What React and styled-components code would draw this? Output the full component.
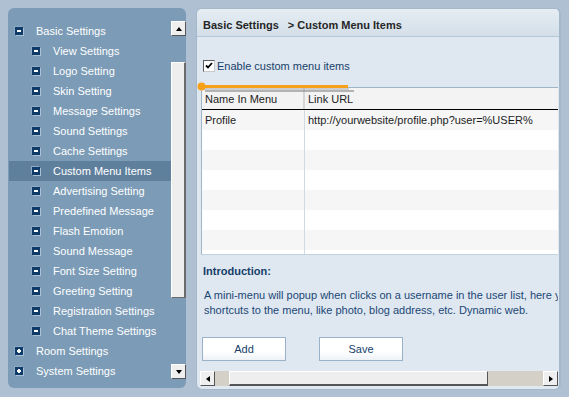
import React from 'react';
import styled, { createGlobalStyle } from 'styled-components';

const GlobalStyle = createGlobalStyle`
  html, body {
    margin: 0;
    padding: 0;
    background: #afc0d2;
  }
  body {
    font-family: "Liberation Sans", Arial, sans-serif;
    font-size: 11px;
  }
`;

const Page = styled.div`
  display: flex;
  gap: 10px;
  padding: 8px 8px 0 8px;
  height: 397px;
  box-sizing: border-box;
`;

const Sidebar = styled.div`
  width: 178px;
  height: 380px;
  background: #7b9bb6;
  border-radius: 6px;
  display: flex;
  padding-left: 1px;
  box-sizing: border-box;
  overflow: hidden;
`;

const Tree = styled.div`
  flex: 1;
  padding-top: 13px;
`;

const TreeRow = styled.div`
  height: 20px;
  display: flex;
  align-items: center;
  gap: 13px;
  padding-left: ${p => (p.$level ? 23 : 6)}px;
  background: ${p => (p.$active ? '#5f809d' : 'transparent')};
  color: #fff;
  white-space: nowrap;
`;

const ToggleIcon = styled.span`
  position: relative;
  width: 8px;
  height: 8px;
  flex: none;
  background: #0f3b69;
  box-shadow: 1px 1px 0 #a9c0d6, -1px -1px 0 #8fabc4;

  &::before {
    content: '';
    position: absolute;
    left: 2px;
    top: 3px;
    width: 4px;
    height: 2px;
    background: #fff;
  }

  &::after {
    content: '';
    display: ${p => (p.$open ? 'none' : 'block')};
    position: absolute;
    left: 3px;
    top: 2px;
    width: 2px;
    height: 4px;
    background: #fff;
  }
`;

const VScroll = styled.div`
  width: 15px;
  margin-top: 13px;
  height: 358px;
  display: flex;
  flex-direction: column;
`;

const ScrollButton = styled.div`
  width: 15px;
  height: 15px;
  flex: none;
  box-sizing: border-box;
  background: #efefef;
  border-top: 1px solid #fff;
  border-left: 1px solid #fff;
  border-right: 1px solid #555;
  border-bottom: 1px solid #555;
  display: flex;
  align-items: center;
  justify-content: center;
`;

const Arrow = styled.span`
  width: 0;
  height: 0;
  border-style: solid;
  border-color: transparent;
  ${p => p.$dir === 'up' && 'border-width: 0 3.5px 4px 3.5px; border-bottom-color: #000;'}
  ${p => p.$dir === 'down' && 'border-width: 4px 3.5px 0 3.5px; border-top-color: #000;'}
  ${p => p.$dir === 'left' && 'border-width: 3.5px 4px 3.5px 0; border-right-color: #000;'}
  ${p => p.$dir === 'right' && 'border-width: 3.5px 0 3.5px 4px; border-left-color: #000;'}
`;

const VTrack = styled.div`
  flex: 1;
  display: flex;
  flex-direction: column;
`;

const VThumb = styled.div`
  margin-top: ${p => p.$offset}px;
  height: ${p => p.$size}px;
  background: #eeeeee;
  border-top: 1px solid #fff;
  border-left: 1px solid #fff;
  border-right: 2px solid #6b6b6b;
  border-bottom: 1px solid #6b6b6b;
  box-sizing: border-box;
`;

const Panel = styled.div`
  position: relative;
  width: 365px;
  height: 382px;
  background: #dfe7f0;
  border: 1px solid #a5b8ca;
  border-right-width: 2px;
  border-radius: 6px;
  box-sizing: border-box;
  display: flex;
  flex-direction: column;
  overflow: hidden;
`;

const PanelHeader = styled.div`
  height: 28px;
  box-sizing: border-box;
  padding: 4px 0 0 6px;
  flex: none;
  display: flex;
  align-items: center;
  background: linear-gradient(#e6edf3, #d3dfe9);
  border-bottom: 1px solid #b7c8d7;
  font-weight: bold;
  color: #262626;
  white-space: nowrap;
`;

const Crumb = styled.span`
  margin-left: 9px;
`;

const PanelBody = styled.div`
  flex: 1;
  display: flex;
  flex-direction: column;
  padding: 1px 1px 3px 3px;
`;

const Viewport = styled.div`
  height: 333px;
  overflow: hidden;
`;

const Canvas = styled.div`
  width: 520px;
  display: flex;
  flex-direction: column;
  align-items: flex-start;
`;

const CheckRow = styled.label`
  margin: 22px 0 0 3px;
  height: 12px;
  display: flex;
  align-items: center;
  gap: 2px;
  color: #173f6a;
`;

const CheckBox = styled.span`
  width: 12px;
  height: 12px;
  box-sizing: border-box;
  background: #fff;
  border-top: 1px solid #5b5b5b;
  border-left: 1px solid #5b5b5b;
  border-right: 1px solid #c9c9c9;
  border-bottom: 1px solid #c9c9c9;
  display: flex;
  align-items: center;
  justify-content: center;
`;

const Annotation = styled.svg`
  position: absolute;
  left: 0;
  top: 68px;
`;

const Table = styled.div`
  margin: 15px 0 0 1px;
  width: 420px;
  height: 168px;
  border-left: 1px solid #9fb5c8;
  border-top: 1px solid #9fb5c8;
  border-bottom: 1px solid #c3d2df;
  box-sizing: border-box;
  overflow: hidden;
  background: #fff;
`;

const HeadRow = styled.div`
  display: grid;
  grid-template-columns: 101px 1fr;
  height: 21px;
  border-bottom: 1px solid #000;
  background: #f3f3f3;
  color: #1d1d1d;
`;

const HeadCell = styled.div`
  display: flex;
  align-items: center;
  padding-left: 3px;
  border-left: ${p => (p.$first ? 'none' : '2px solid #d6d6d6')};
`;

const BodyRow = styled.div`
  display: grid;
  grid-template-columns: 101px 1fr;
  height: 20px;
  background: ${p => (p.$odd ? '#f6f6f6' : '#fff')};
  color: #1d1d1d;
`;

const Cell = styled.div`
  display: flex;
  align-items: center;
  padding-left: 3px;
  border-left: ${p => (p.$first ? 'none' : '1px solid #d0dae2')};
  margin-left: ${p => (p.$first ? 0 : 1)}px;
  white-space: nowrap;
`;

const IntroTitle = styled.div`
  margin: 9px 0 0 3px;
  line-height: 14px;
  font-weight: bold;
  color: #163e68;
`;

const IntroText = styled.p`
  margin: 10px 0 0 4px;
  line-height: 15px;
  color: #1b4776;
  white-space: nowrap;
`;

const ButtonRow = styled.div`
  display: flex;
  gap: 33px;
  margin: 19px 0 0 2px;
`;

const Button = styled.button`
  width: 84px;
  height: 24px;
  padding: 0;
  font: inherit;
  color: #173f6a;
  background: linear-gradient(#fff 60%, #eef2f6);
  border: 1px solid #9ab2c7;
  cursor: pointer;
`;

const HScroll = styled.div`
  height: 15px;
  display: flex;
  background: #d4d0c8;
`;

const HThumb = styled.div`
  margin-left: ${p => p.$offset}px;
  width: ${p => p.$size}px;
  background: #eeeeee;
  border-top: 1px solid #fff;
  border-left: 1px solid #fff;
  border-right: 1px solid #555;
  border-bottom: 2px solid #555;
  box-sizing: border-box;
`;

const HSpacer = styled.div`
  flex: 1;
`;

const menu = [
  { label: 'Basic Settings', level: 0, open: true },
  { label: 'View Settings', level: 1 },
  { label: 'Logo Setting', level: 1 },
  { label: 'Skin Setting', level: 1 },
  { label: 'Message Settings', level: 1 },
  { label: 'Sound Settings', level: 1 },
  { label: 'Cache Settings', level: 1 },
  { label: 'Custom Menu Items', level: 1, active: true },
  { label: 'Advertising Setting', level: 1 },
  { label: 'Predefined Message', level: 1 },
  { label: 'Flash Emotion', level: 1 },
  { label: 'Sound Message', level: 1 },
  { label: 'Font Size Setting', level: 1 },
  { label: 'Greeting Setting', level: 1 },
  { label: 'Registration Settings', level: 1 },
  { label: 'Chat Theme Settings', level: 1 },
  { label: 'Room Settings', level: 0, open: false },
  { label: 'System Settings', level: 0, open: false },
];

const items = [
  { name: 'Profile', url: 'http://yourwebsite/profile.php?user=%USER%' },
  {}, {}, {}, {}, {}, {}, {},
];

const App = () => {
  return (
    <>
      <GlobalStyle />
      <Page>
        <Sidebar>
          <Tree>
            {menu.map(m => (
              <TreeRow key={m.label} $level={m.level} $active={m.active}>
                <ToggleIcon $open={m.level === 1 || m.open} />
                {m.label}
              </TreeRow>
            ))}
          </Tree>
          <VScroll>
            <ScrollButton><Arrow $dir="up" /></ScrollButton>
            <VTrack>
              <VThumb $offset={26} $size={236} />
            </VTrack>
            <ScrollButton><Arrow $dir="down" /></ScrollButton>
          </VScroll>
        </Sidebar>

        <Panel>
          <PanelHeader>
            Basic Settings<Crumb>&gt; Custom Menu Items</Crumb>
          </PanelHeader>
          <PanelBody>
            <Viewport>
              <Canvas>
                <CheckRow>
                  <CheckBox>
                    <svg width="8" height="8" viewBox="0 0 8 8">
                      <path d="M1 3.5 L3 5.5 L7 1" fill="none" stroke="#000" strokeWidth="1.8" />
                    </svg>
                  </CheckBox>
                  Enable custom menu items
                </CheckRow>
                <Table>
                  <HeadRow>
                    <HeadCell $first>Name In Menu</HeadCell>
                    <HeadCell>Link URL</HeadCell>
                  </HeadRow>
                  {items.map((it, i) => (
                    <BodyRow key={i} $odd={i % 2 === 0}>
                      <Cell $first>{it.name}</Cell>
                      <Cell>{it.url}</Cell>
                    </BodyRow>
                  ))}
                </Table>
                <IntroTitle>Introduction:</IntroTitle>
                <IntroText>
                  A mini-menu will popup when clicks on a username in the user list, here you
                  <br />
                  shortcuts to the menu, like photo, blog address, etc. Dynamic web.
                </IntroText>
                <ButtonRow>
                  <Button>Add</Button>
                  <Button>Save</Button>
                </ButtonRow>
              </Canvas>
            </Viewport>
            <HScroll>
              <ScrollButton><Arrow $dir="left" /></ScrollButton>
              <HThumb $offset={14} $size={259} />
              <HSpacer />
              <ScrollButton><Arrow $dir="right" /></ScrollButton>
            </HScroll>
          </PanelBody>
          <Annotation width="160" height="16" viewBox="0 0 160 16">
            <line x1="8" y1="14" x2="157" y2="14" stroke="#8a8a8a" strokeWidth="2" opacity="0.6" />
            <line x1="5" y1="12" x2="152" y2="12" stroke="#8f8f8f" strokeWidth="1.5" opacity="0.5" />
            <line x1="4" y1="9.5" x2="151" y2="9.5" stroke="#f7a11a" strokeWidth="3" />
            <circle cx="4.5" cy="9.5" r="4" fill="#f7a11a" />
          </Annotation>
        </Panel>
      </Page>
    </>
  );
};

export default App;
